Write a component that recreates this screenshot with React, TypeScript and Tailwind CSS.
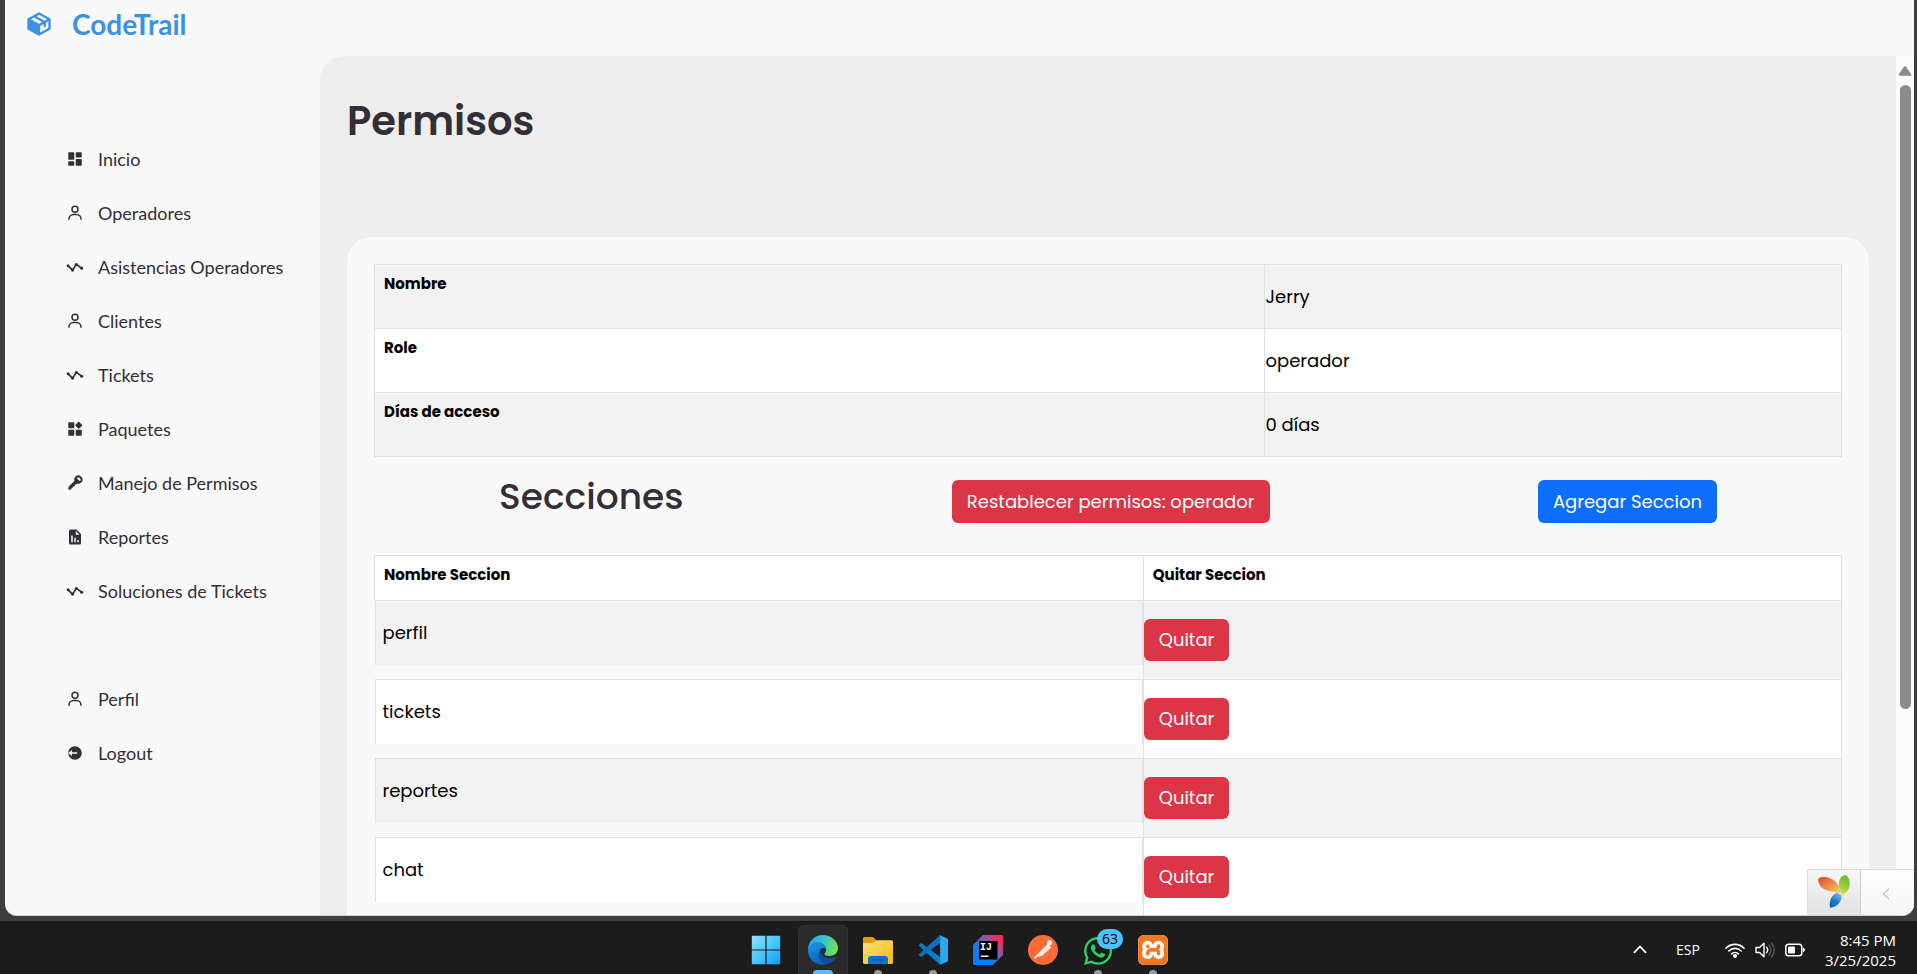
import type { ComponentType, ReactNode } from "react";
import {
  BiSolidDashboard,
  BiSolidKey,
  BiSolidLogOutCircle,
  BiSolidPackage,
  BiSolidReport,
  BiSolidWidget,
  BiUser,
} from "react-icons/bi";
import { SiXampp } from "react-icons/si";
import { FaWhatsapp } from "react-icons/fa";

type NavItem = { label: string; icon: ComponentType<{ className?: string }> };

function ActivityIcon({ className }: { className?: string }) {
  return (
    <svg viewBox="0 0 18 18" className={className} fill="currentColor">
      <path
        d="M2.100 7.800 6.500 12.200 10.400 6.400 15.700 10.300"
        fill="none"
        stroke="currentColor"
        strokeWidth="1.700"
        strokeLinejoin="round"
      />
      <circle cx="2.100" cy="7.800" r="1.500" />
      <circle cx="6.500" cy="12.100" r="1.600" />
      <circle cx="10.400" cy="6.500" r="1.600" />
      <circle cx="15.700" cy="10.300" r="1.500" />
    </svg>
  );
}

const MAIN_NAV: NavItem[] = [
  { label: "Inicio", icon: BiSolidDashboard },
  { label: "Operadores", icon: BiUser },
  { label: "Asistencias Operadores", icon: ActivityIcon },
  { label: "Clientes", icon: BiUser },
  { label: "Tickets", icon: ActivityIcon },
  { label: "Paquetes", icon: BiSolidWidget },
  { label: "Manejo de Permisos", icon: BiSolidKey },
  { label: "Reportes", icon: BiSolidReport },
  { label: "Soluciones de Tickets", icon: ActivityIcon },
];

const ACCOUNT_NAV: NavItem[] = [
  { label: "Perfil", icon: BiUser },
  { label: "Logout", icon: BiSolidLogOutCircle },
];

const DETAILS = [
  { label: "Nombre", value: "Jerry" },
  { label: "Role", value: "operador" },
  { label: "Días de acceso", value: "0 días" },
];

const SECTIONS = ["perfil", "tickets", "reportes", "chat"];

function NavList({ items }: { items: NavItem[] }) {
  return (
    <ul>
      {items.map(({ label, icon: Icon }) => (
        <li key={label}>
          <a href="#" className="flex h-[54px] items-center gap-[14px] pl-[61px] text-lg whitespace-nowrap">
            <Icon className="size-[18px]" />
            {label}
          </a>
        </li>
      ))}
    </ul>
  );
}

function Sidebar() {
  return (
    <nav className="w-[315px] shrink-0 pt-[76px] font-['Lato',sans-serif] text-[#342e37]">
      <NavList items={MAIN_NAV} />
      <div className="mt-[54px]">
        <NavList items={ACCOUNT_NAV} />
      </div>
    </nav>
  );
}

function DetailsTable() {
  return (
    <table className="w-full border-collapse text-black">
      <tbody>
        {DETAILS.map(({ label, value }) => (
          <tr key={label} className="h-16 odd:bg-[#f2f2f2] even:bg-white">
            <th
              scope="row"
              className="w-[60.7%] border border-[#dee2e6] px-[9px] pt-2 text-left align-top text-[15px] leading-[22px] font-bold"
            >
              {label}
            </th>
            <td className="border border-[#dee2e6] text-lg">{value}</td>
          </tr>
        ))}
      </tbody>
    </table>
  );
}

function SectionsTable() {
  return (
    <table className="w-full border-collapse text-black">
      <thead>
        <tr className="h-[45px] bg-white text-left align-top text-[15px] leading-[22px]">
          <th className="w-[52.4%] border border-[#dee2e6] px-[9px] pt-2 font-bold">Nombre Seccion</th>
          <th className="border border-[#dee2e6] px-[9px] pt-2 font-bold">Quitar Seccion</th>
        </tr>
      </thead>
      <tbody>
        {SECTIONS.map((name) => (
          <tr key={name} className="group align-top">
            <td className="border-y border-[#dee2e6] p-0">
              <div className="flex h-16 items-center border-x border-[#dee2e6] px-[7px] text-lg group-odd:bg-[#f2f2f2] group-even:bg-white">
                {name}
              </div>
            </td>
            <td className="border border-[#dee2e6] py-[18px] group-odd:bg-[#f2f2f2] group-even:bg-white">
              <button className="block h-[42px] rounded-md bg-[#dc3545] px-[15px] text-lg text-white">Quitar</button>
            </td>
          </tr>
        ))}
      </tbody>
    </table>
  );
}

function Scrollbar() {
  return (
    <div className="flex w-[18px] shrink-0 flex-col items-center bg-[#fcfcfc] pt-[10px]" aria-hidden="true">
      <svg viewBox="0 0 14 10" className="h-[10px] w-[14px] fill-[#8b8b8b]">
        <path d="M6 .8a1.200 1.200 0 0 1 2 0l5 7.200a1.100 1.100 0 0 1-.9 1.800H1.900a1.100 1.100 0 0 1-.9-1.800z" />
      </svg>
      <div className="mt-[9px] h-[73.5%] w-[11px] rounded-full bg-[#8b8b8b]" />
    </div>
  );
}

function DebugToolbar() {
  return (
    <div className="absolute right-0 bottom-0 flex h-[46px] border-t border-l border-[#dcdcdc] bg-white">
      <a
        href="#"
        aria-label="Yii"
        className="flex w-[53px] items-center justify-center border-r border-[#cfcfcf] bg-linear-to-b from-[#f7f7f7] to-[#e2e2e2]"
      >
        <svg viewBox="0 0 32 33" className="mb-[2px] h-[33px] w-8">
          <defs>
            <linearGradient id="yiiRed" x1="0" y1="0" x2="1" y2="1">
              <stop offset="0" stopColor="#dd4a2b" />
              <stop offset=".5" stopColor="#ee8a4a" />
              <stop offset="1" stopColor="#f8d36b" />
            </linearGradient>
            <linearGradient id="yiiGreen" x1=".5" y1="0" x2=".3" y2="1">
              <stop offset="0" stopColor="#73b92c" />
              <stop offset=".6" stopColor="#a4d045" />
              <stop offset="1" stopColor="#e3e67a" />
            </linearGradient>
            <linearGradient id="yiiBlue" x1=".8" y1="0" x2=".2" y2="1">
              <stop offset="0" stopColor="#7fb8e2" />
              <stop offset=".6" stopColor="#1b79c4" />
              <stop offset="1" stopColor="#0b63b0" />
            </linearGradient>
          </defs>
          <path
            d="M.4 3.600C1.500 1.600 8 1.400 12.500 3.400 18.500 6 22 11.500 22.800 18.500 16.500 16.500 8 16.500 3.800 12.500.8 9.500-.3 5.500.4 3.600z"
            fill="url(#yiiRed)"
          />
          <path
            d="M27 .2c3.200.3 5 4.600 4.800 9.300-.3 5.500-4 8.500-8 11.700.2-3.700-3-6.700-3-11.400C20.800 4.500 23.500 0 27 .2z"
            fill="url(#yiiGreen)"
          />
          <path
            d="M18.500 17.800c2 .5 3.500 1.400 5.200 3.400 0 5.200-4.500 10.800-11.700 11.600-1.200-5.800 1-12 6.500-15z"
            fill="url(#yiiBlue)"
          />
        </svg>
      </a>
      <button aria-label="Abrir barra" className="flex w-[53px] items-center justify-center bg-linear-to-b from-white to-[#f5f5f5]">
        <svg viewBox="0 0 8 12" className="mt-[3px] mr-1 h-3 w-2 fill-none stroke-[#a0a0a0]">
          <path d="M7 .8 1.500 6 7 11.200" />
        </svg>
      </button>
    </div>
  );
}

function WindowsIcon() {
  return (
    <svg viewBox="0 0 30 30" className="size-[30px]">
      <defs>
        <linearGradient id="win" x1="0" y1="0" x2="1" y2="1">
          <stop offset="0" stopColor="#8fe3ff" />
          <stop offset=".5" stopColor="#4cc8fd" />
          <stop offset="1" stopColor="#0a9bff" />
        </linearGradient>
      </defs>
      <path
        fill="url(#win)"
        d="M1.500.8H14.400V14.400H.8V1.500A.7.7 0 0 1 1.500.8zM15.600.8H28.500a.7.7 0 0 1 .7.700V14.400H15.600zM.8 15.600H14.400V29.200H1.500a.7.7 0 0 1-.7-.7zM15.600 15.600H29.200V28.500a.7.7 0 0 1-.7.7H15.600z"
      />
    </svg>
  );
}

function EdgeIcon() {
  return (
    <svg viewBox="0 0 30 30" className="size-[30px]">
      <defs>
        <linearGradient id="edgeTop" x1="0" y1=".3" x2="1" y2=".5">
          <stop offset="0" stopColor="#2aa5ea" />
          <stop offset=".45" stopColor="#31c3d0" />
          <stop offset="1" stopColor="#74e349" />
        </linearGradient>
        <linearGradient id="edgeLeft" x1="0" y1="0" x2=".4" y2="1">
          <stop offset="0" stopColor="#1d9be6" />
          <stop offset="1" stopColor="#0b62bd" />
        </linearGradient>
      </defs>
      <path
        d="M0 15C0 6 7 0 15 0s15 6 15 13c0 5-4 8-9 8-3 0-4.500-1-4.500-2s1.500-1.500 1.500-4c0-4-4-7.500-9-7.500-4 0-7.500 2.500-9 7.500z"
        fill="url(#edgeTop)"
      />
      <path
        d="M0 15.500C0 10 4 7 9 7c5.500 0 9 3 9.200 7-3-2.500-7 0-7 4.500 0 5 4 9.500 9 10.200C11 32.500 0 26 0 15.500z"
        fill="url(#edgeLeft)"
      />
      <path
        d="M12.500 14.500C8 19 12 29.500 19.500 29c4-1 7-3.500 8.800-6.500.3-.6-.2-1-.8-.6-7 3.300-15 .2-15-7.400z"
        fill="#0f4fa0"
      />
    </svg>
  );
}

function FolderIcon() {
  return (
    <svg viewBox="0 0 30 30" className="size-[30px]">
      <defs>
        <linearGradient id="folder" x1="0" y1="0" x2="1" y2="1">
          <stop offset="0" stopColor="#ffe07c" />
          <stop offset="1" stopColor="#fdb90b" />
        </linearGradient>
      </defs>
      <path d="M0 3.500C0 2.500.7 2 1.500 2H9c1 0 1.500.3 2.200 1L13 5v5H0z" fill="#e09c08" />
      <path
        d="M0 8h8.500c1 0 1.700-.2 2.400-.8L13 5.200h15.500c.9 0 1.500.6 1.500 1.500v20.800c0 .9-.6 1.500-1.500 1.500h-27C.6 29 0 28.400 0 27.500z"
        fill="url(#folder)"
      />
      <path d="M5 29v-5c0-2 1-3 3-3h14c2 0 3 1 3 3v5z" fill="#0b74cf" />
      <path d="M8.500 24.800h13" stroke="#0b4f96" strokeWidth="1.200" />
    </svg>
  );
}

function CodeIcon() {
  return (
    <svg viewBox="0 0 30 30" className="size-[30px]">
      <path
        d="M.6 10.200 2.500 8.500c.5-.4 1.100-.4 1.600 0L22 22v7.300a1.800 1.800 0 0 1-1.200-.5L.6 10.400z"
        fill="#0a7fd0"
      />
      <path
        d="M.6 19.800 2.500 21.500c.5.4 1.100.4 1.600 0L22 8V.7a1.800 1.800 0 0 0-1.200.5L.6 19.600z"
        fill="#0a72bd"
      />
      <path
        d="m22 .3 6.900 2.900c.7.300 1.100.9 1.100 1.700v20.200c0 .8-.4 1.400-1.100 1.700L22 29.700c-.7.3-1.300.1-1.700-.3.800.5 1.800 0 1.800-1V1.600c0-1-1-1.500-1.800-1 .4-.4 1-.6 1.700-.3z"
        fill="#29a8f0"
      />
    </svg>
  );
}

function IntellijIcon() {
  return (
    <svg viewBox="0 0 30 30" className="size-[30px]">
      <defs>
        <linearGradient id="ij" x1="0" y1="1" x2="1" y2="0">
          <stop offset=".3" stopColor="#087cfa" />
          <stop offset=".62" stopColor="#7c5fb8" />
          <stop offset=".85" stopColor="#fe2857" />
        </linearGradient>
      </defs>
      <path d="M10 0h18.500c.9 0 1.500.6 1.500 1.500V20L20 30H1.500C.6 30 0 29.400 0 28.500V10z" fill="url(#ij)" />
      <path d="M6 6h18.500v18.500H6z" fill="#000" />
      <path d="M8 20.500h7.500V22H8z" fill="#fff" />
      <text x="7" y="15" fill="#fff" fontSize="10" fontWeight="700" fontFamily="Liberation Mono, monospace">
        IJ
      </text>
    </svg>
  );
}

function PostmanIcon() {
  return (
    <svg viewBox="0 0 30 30" className="size-[30px]">
      <circle cx="15" cy="15" r="15" fill="#ff6c37" />
      <circle cx="21.500" cy="7.800" r="2.500" fill="#fff" />
      <path
        d="M18.800 9.800c.6-.4 1.300-.3 1.800.1l1.700 1.600c.6.6.5 1.300 0 1.900l-8 7.100-5.400 1.500-2.700 2 .1-1.500 5-5z"
        fill="#fff"
      />
      <path d="m19.500 11.500-7.500 7.500M21 13l-6.500 6" stroke="#ff9b78" strokeWidth=".6" fill="none" />
    </svg>
  );
}

type TaskbarAppProps = { label: string; active?: boolean; running?: boolean; children: ReactNode };

function TaskbarApp({ label, active, running, children }: TaskbarAppProps) {
  return (
    <button
      aria-label={label}
      className={
        active
          ? "relative flex h-full w-[50px] items-start justify-center rounded-t-md border border-b-0 border-[#333333] bg-[#2a2a2a] pt-[9px]"
          : "relative flex h-full w-[50px] items-start justify-center pt-[10px]"
      }
    >
      {children}
      {active && <span className="absolute bottom-0 h-1 w-5 rounded-t-full bg-[#4cc2ff]" />}
      {running && <span className="absolute bottom-0 h-1 w-2 rounded-t-full bg-[#9a9a9a]" />}
    </button>
  );
}

function Taskbar() {
  return (
    <footer className="grid h-[53px] shrink-0 grid-cols-[1fr_auto_1fr] bg-[#1c1c1c] pt-1">
      <div />
      <div className="flex gap-[7px] pl-[2px]">
        <TaskbarApp label="Inicio">
          <WindowsIcon />
        </TaskbarApp>
        <div className="flex gap-[5px]">
          <TaskbarApp label="Edge" active>
            <EdgeIcon />
          </TaskbarApp>
          <TaskbarApp label="Archivos" running>
            <FolderIcon />
          </TaskbarApp>
          <TaskbarApp label="Visual Studio Code" running>
            <CodeIcon />
          </TaskbarApp>
          <TaskbarApp label="IntelliJ IDEA">
            <IntellijIcon />
          </TaskbarApp>
          <TaskbarApp label="Postman">
            <PostmanIcon />
          </TaskbarApp>
          <TaskbarApp label="WhatsApp" running>
            <FaWhatsapp className="size-[32px] text-[#25d366]" />
            <span className="absolute top-1 right-0 flex h-5 w-[26px] items-center justify-center rounded-full bg-[#4cc2ff] font-['Open_Sans',sans-serif] text-sm text-black">
              63
            </span>
          </TaskbarApp>
          <TaskbarApp label="XAMPP" running>
            <SiXampp className="size-[30px] rounded-md bg-white text-[#f37623]" />
          </TaskbarApp>
        </div>
      </div>
      <div className="flex items-center justify-end pr-[21px] font-['Open_Sans',sans-serif] text-sm text-white">
        <svg viewBox="0 0 14 9" className="mr-[29px] h-[9px] w-[14px] fill-none stroke-white" strokeWidth="1.800">
          <path d="M1 7.800 7 1.500l6 6.300" />
        </svg>
        <span>ESP</span>
        <svg
          viewBox="0 0 20 16"
          className="ml-[25px] h-4 w-5 fill-none stroke-white"
          strokeWidth="1.600"
          strokeLinecap="round"
        >
          <path d="M1 6.200a12.500 12.500 0 0 1 18 0M3.800 9a8.700 8.700 0 0 1 12.400 0M6.600 11.800a4.900 4.900 0 0 1 6.800 0" />
          <circle cx="10" cy="13.800" r="1.300" fill="#fff" />
        </svg>
        <svg
          viewBox="0 0 20 18"
          className="ml-[10px] h-[18px] w-5 fill-none stroke-white"
          strokeWidth="1.400"
          strokeLinejoin="round"
          strokeLinecap="round"
        >
          <path d="M1 6.500h3.500L9 2.300v13.400L4.500 11.500H1z" />
          <path d="M11.500 6.300a4 4 0 0 1 0 5.400" />
          <path d="M14 4a7.500 7.500 0 0 1 0 10M16.500 2a10.500 10.500 0 0 1 0 14" stroke="#5a5a5a" />
        </svg>
        <svg viewBox="0 0 20 14" className="ml-[10px] h-[14px] w-5">
          <rect x=".8" y="1.300" width="16" height="11.400" rx="2.800" fill="none" stroke="#fff" strokeWidth="1.500" />
          <rect x="3" y="3.500" width="7" height="7" rx="1" fill="#fff" />
          <path d="M18 4.800c1.200.3 2 1.200 2 2.200s-.8 1.900-2 2.200z" fill="#fff" />
        </svg>
        <div className="ml-5 text-right text-[15px] leading-5">
          <div>8:45 PM</div>
          <div>3/25/2025</div>
        </div>
      </div>
    </footer>
  );
}

export default function App() {
  return (
    <div className="flex h-screen flex-col bg-[#3d3d3c] font-['Poppins','Inter',sans-serif]">
      <div className="relative mr-[3px] mb-[5px] ml-[5px] flex min-h-0 flex-1 flex-col overflow-hidden rounded-b-xl border-b border-[#cfd4cf] bg-[#f9f9f9]">
        <header className="flex h-14 shrink-0 items-start pt-2 pl-5 text-[#3c91e6]">
          <a href="#" className="flex items-center gap-[19px] font-['Lato',sans-serif] text-[28px] leading-8 font-bold">
            <BiSolidPackage className="size-[28px]" />
            CodeTrail
          </a>
        </header>
        <div className="flex min-h-0 flex-1">
          <Sidebar />
          <main className="min-w-0 flex-1 overflow-hidden rounded-tl-3xl bg-[#eeeeee] px-[27px] pt-[41px]">
            <h1 className="text-[40px] leading-[48px] font-semibold text-[#342e37]">Permisos</h1>
            <section className="mt-[92px] rounded-3xl bg-[#f9f9f9] p-[27px]">
              <DetailsTable />
              <div className="flex items-start justify-between px-[125px] pt-[23px] pb-8">
                <h2 className="text-4xl leading-[34px] font-medium text-[#342e37]">Secciones</h2>
                <button className="h-[43px] rounded-md bg-[#dc3545] px-[15px] text-lg text-white">
                  Restablecer permisos: operador
                </button>
                <button className="h-[43px] rounded-md bg-[#0d6efd] px-[15px] text-lg text-white">
                  Agregar Seccion
                </button>
              </div>
              <SectionsTable />
            </section>
          </main>
          <Scrollbar />
        </div>
        <DebugToolbar />
      </div>
      <Taskbar />
    </div>
  );
}
